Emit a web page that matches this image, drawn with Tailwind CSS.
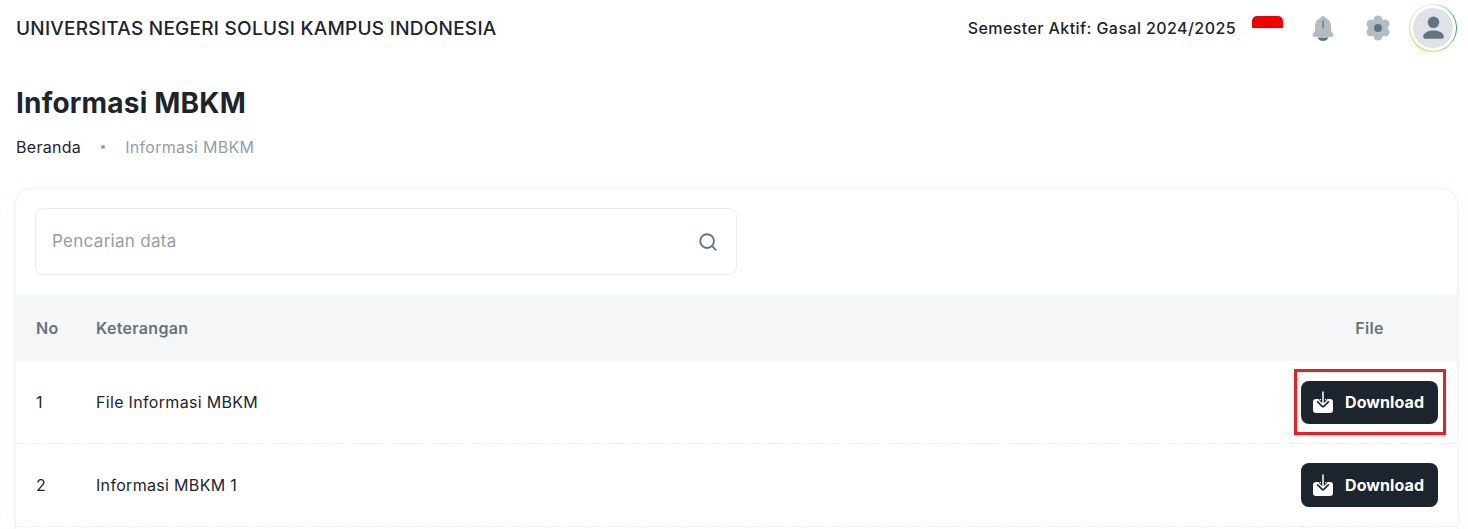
<!DOCTYPE html>
<html lang="en">
  <head>
    <meta charset="UTF-8" />
    <meta name="viewport" content="width=device-width, initial-scale=1.0" />
    <script src="https://cdn.jsdelivr.net/npm/@tailwindcss/browser@4"></script>
    <title>Informasi MBKM</title>
  </head>
  <body class="bg-white h-[529px] overflow-hidden font-['Inter',sans-serif] text-[#1c252e]">
    <header class="h-[56px] pl-4 pr-[11px] flex items-center justify-between">
      <div class="mt-[2px] text-[19px] font-medium tracking-[0.25px]">UNIVERSITAS NEGERI SOLUSI KAMPUS INDONESIA</div>
      <div class="flex items-center">
        <span class="text-[16px] font-medium tracking-[0.42px]">Semester Aktif: Gasal 2024/2025</span>
        <div class="ml-4 w-[31px] h-[24px] rounded-t-[5px] overflow-hidden">
          <div class="h-[12px] bg-[#f00000]"></div>
        </div>
        <!-- bell -->
        <svg class="ml-[26px]" width="28" height="28" viewBox="0 0 28 28">
          <path fill="#b3bcc4" d="M14 2C12.500 2 11.800 3 11.500 4 8 5 6 8.500 6 12v4C6 18 3.500 19.500 3.500 21 3.500 22.500 5 23 7 23H21c2 0 3.500-.5 3.500-2 0-1.500-2.500-3-2.500-5v-4c0-3.500-2-7-5.500-8C16.200 3 15.500 2 14 2z"/>
          <path fill="#637381" d="M8.500 23.500H19.500C18.500 26 16.500 27 14 27S9.500 26 8.500 23.500z"/>
          <path stroke="#637381" stroke-width="1.300" stroke-linecap="round" d="M14 7v7"/>
        </svg>
        <!-- settings -->
        <svg class="ml-[27px]" width="28" height="28" viewBox="0 0 28 28" fill="#b3bcc4">
          <circle cx="14" cy="6" r="4.500"/>
          <circle cx="21" cy="10" r="4.500"/>
          <circle cx="21" cy="18" r="4.500"/>
          <circle cx="14" cy="22" r="4.500"/>
          <circle cx="7" cy="18" r="4.500"/>
          <circle cx="7" cy="10" r="4.500"/>
          <circle cx="14" cy="14" r="8"/>
          <circle cx="14" cy="14" r="4" fill="#637381"/>
        </svg>
        <div class="ml-[17px] w-[48px] h-[48px] rounded-full p-[1px] flex items-center justify-center bg-[conic-gradient(#e3f1dc,#6fcf97,#22a565,#8fcf8a,#f5c66a,#f5b942,#f7cf8f,#f3e6d0,#e3f1dc)]">
          <div class="w-full h-full rounded-full bg-white flex items-center justify-center">
            <div class="w-[40px] h-[40px] rounded-full bg-[#dfe3e8] flex items-center justify-center">
              <svg width="33" height="33" viewBox="0 0 24 24" fill="#637381">
                <circle cx="12" cy="7.500" r="4.200"/>
                <path d="M12 13.500c-4.200 0-7.500 2-7.500 4.300 0 1 .8 1.700 1.800 1.700h11.400c1 0 1.800-.7 1.800-1.700 0-2.300-3.300-4.300-7.500-4.300z"/>
              </svg>
            </div>
          </div>
        </div>
      </div>
    </header>

    <main class="px-4">
      <h1 class="mt-[29px] text-[28px] leading-[36px] font-bold tracking-[0.2px]">Informasi MBKM</h1>
      <nav class="mt-[14px] flex items-center text-[16px] leading-[24px] tracking-[0.3px]">
        <span>Beranda</span>
        <span class="mx-[20px] w-1 h-1 rounded-full bg-[#919eab]"></span>
        <span class="text-[#919eab]">Informasi MBKM</span>
      </nav>

      <section class="mt-[30px] w-[1441px] h-[340px] overflow-hidden rounded-t-[16px] bg-white shadow-[0_0_3px_0_rgba(145,158,171,0.25),0_4px_24px_-4px_rgba(145,158,171,0.1)]">
        <div class="pt-[19px] pl-[19px] pb-[20px]">
          <div class="w-[702px] h-[67px] rounded-[8px] border border-[#919eab]/20 flex items-center justify-between pl-4 pr-[17px]">
            <span class="text-[17px] text-[#919eab] tracking-[0.3px]">Pencarian data</span>
            <svg width="22" height="22" viewBox="0 0 24 24" fill="none" stroke="#637381" stroke-width="2" stroke-linecap="round">
              <circle cx="11" cy="11" r="7.500"/>
              <path d="M16.500 16.500 20.500 20.500"/>
            </svg>
          </div>
        </div>
        <table class="w-full border-collapse text-[16px] tracking-[0.32px]">
          <thead>
            <tr class="h-[66px] bg-[#f4f6f8] text-[#637381]">
              <th class="pl-5 w-[80px] text-left font-semibold">No</th>
              <th class="text-left font-semibold">Keterangan</th>
              <th class="w-[156px] pr-[19px] font-semibold text-center">File</th>
            </tr>
          </thead>
          <tbody>
            <tr class="h-[82px] border-b border-dashed border-[#919eab]/20">
              <td class="pl-5">1</td>
              <td>File Informasi MBKM</td>
              <td class="pr-[19px]">
                <a class="relative mt-[1px] w-[137px] h-[43px] rounded-[8px] bg-[#1c252e] text-white font-bold tracking-[0.1px] flex items-center gap-[10px] pl-[10px]">
                  <svg width="24" height="24" viewBox="0 0 24 24">
                    <rect x="2" y="9" width="20" height="14" rx="3" fill="#fff"/>
                    <path fill="none" stroke="#1c252e" stroke-width="4" stroke-linejoin="round" d="M12 1v14M7 10.500l5 5 5-5"/>
                    <path fill="none" stroke="#fff" stroke-width="1.500" stroke-linecap="round" stroke-linejoin="round" d="M12 2v13M7.500 10.500 12 15l4.500-4.500"/>
                  </svg>
                  Download
                  <span class="absolute -left-[7px] -right-[8px] -top-[12px] -bottom-[11px] border-[3px] border-[#ee1c25]"></span>
                </a>
              </td>
            </tr>
            <tr class="h-[83px] border-b border-dashed border-[#919eab]/20">
              <td class="pl-5">2</td>
              <td>Informasi MBKM 1</td>
              <td class="pr-[19px]">
                <a class="w-[137px] h-[44px] rounded-[8px] bg-[#1c252e] text-white font-bold tracking-[0.1px] flex items-center gap-[10px] pl-[10px]">
                  <svg width="24" height="24" viewBox="0 0 24 24">
                    <rect x="2" y="9" width="20" height="14" rx="3" fill="#fff"/>
                    <path fill="none" stroke="#1c252e" stroke-width="4" stroke-linejoin="round" d="M12 1v14M7 10.500l5 5 5-5"/>
                    <path fill="none" stroke="#fff" stroke-width="1.500" stroke-linecap="round" stroke-linejoin="round" d="M12 2v13M7.500 10.500 12 15l4.500-4.500"/>
                  </svg>
                  Download
                </a>
              </td>
            </tr>
          </tbody>
        </table>
      </section>
    </main>
  </body>
</html>
